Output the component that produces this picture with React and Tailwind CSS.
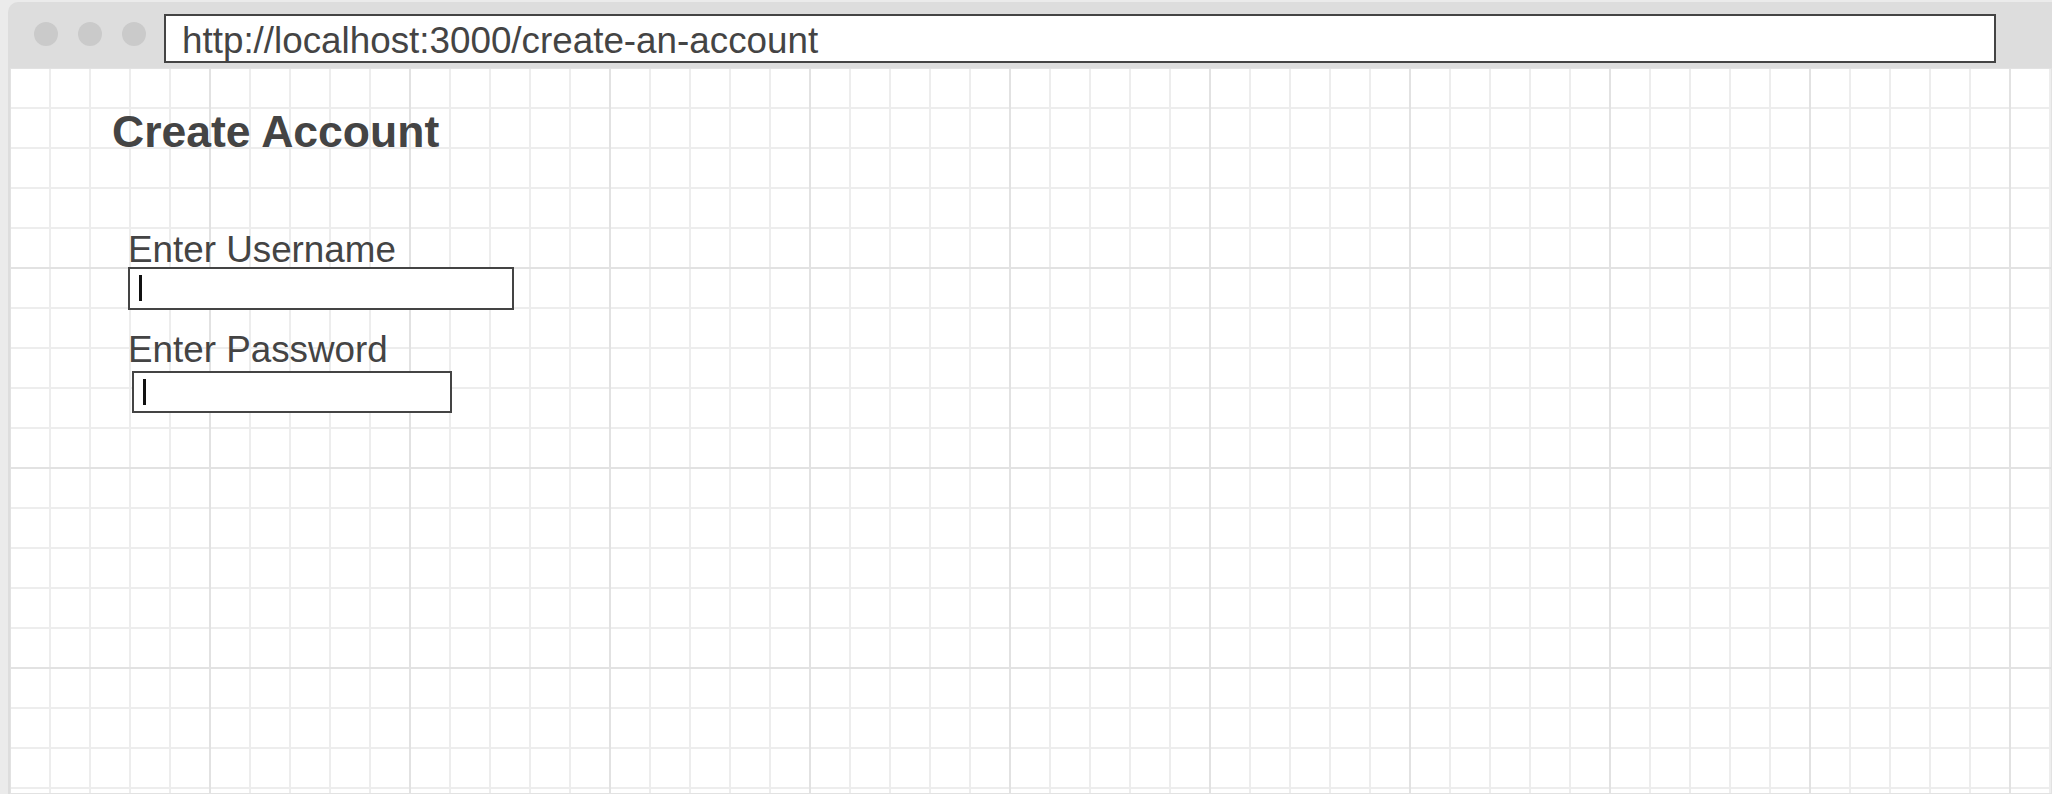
export default function App() {
  return (
    <div className="h-screen w-full overflow-hidden bg-[#ebebeb] pt-[2px] pl-[8px] font-['Liberation_Sans',Arial,sans-serif] text-[#444444]">
      <div className="flex h-full flex-col rounded-tl-[10px] bg-[#dddddd]">
        {/* title bar */}
        <div className="flex h-[66px] shrink-0 items-start">
          <div className="ml-[26px] mt-[20px] flex gap-[20px]">
            <span className="block h-[24px] w-[24px] rounded-full bg-[#cacaca]" />
            <span className="block h-[24px] w-[24px] rounded-full bg-[#cacaca]" />
            <span className="block h-[24px] w-[24px] rounded-full bg-[#cacaca]" />
          </div>
          <div className="ml-[18px] mr-[56px] mt-[12px] h-[49px] flex-1 border-2 border-[#444444] bg-white pl-[16px] pt-[5px] text-[36.8px] leading-[40px] whitespace-nowrap">
            http://localhost:3000/create-an-account
          </div>
        </div>
        {/* content */}
        <div className="ml-[2px] flex-1 bg-white bg-[image:repeating-linear-gradient(to_right,#e2e2e2_0_2px,transparent_2px_200px),repeating-linear-gradient(to_bottom,#e2e2e2_0_2px,transparent_2px_200px),repeating-linear-gradient(to_right,#ededed_0_2px,transparent_2px_40px),repeating-linear-gradient(to_bottom,#ededed_0_2px,transparent_2px_40px)] bg-[position:-1px_-1px] pl-[102px] pt-[39px]">
          <h1 className="text-[44.5px] font-bold leading-[50px]">Create Account</h1>
          <div className="ml-[16px] mt-[75px] flex flex-col items-start">
            <label className="text-[36.8px] leading-[35px]">Enter Username</label>
            <div className="h-[43px] w-[386px] border-2 border-[#444444] bg-white pl-[9px] pt-[6px]">
              <div className="h-[26px] w-[3px] bg-[#111111]" />
            </div>
            <label className="mt-[22px] text-[36.8px] leading-[36px]">Enter Password</label>
            <div className="ml-[4px] mt-[3px] h-[42px] w-[320px] border-2 border-[#444444] bg-white pl-[9px] pt-[6px]">
              <div className="h-[26px] w-[3px] bg-[#111111]" />
            </div>
          </div>
        </div>
      </div>
    </div>
  );
}
